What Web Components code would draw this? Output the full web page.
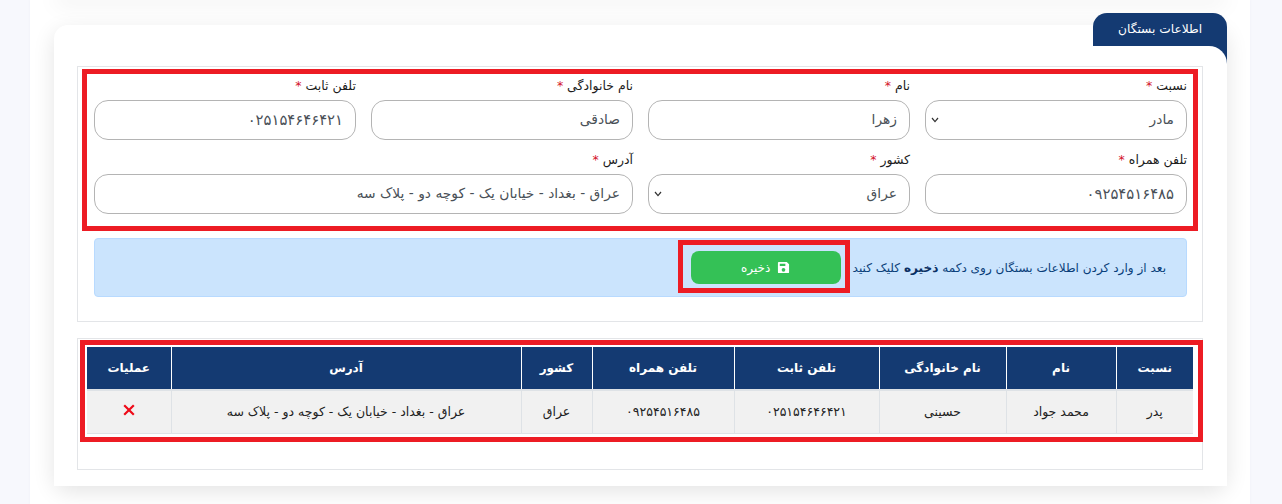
<!DOCTYPE html>
<html lang="fa" dir="rtl">
<head>
<meta charset="utf-8">
<title>اطلاعات بستگان</title>
<style>
  html, body { margin: 0; height: 504px; overflow: hidden; background: #f7f8fd; }
  body { font-family: "DejaVu Sans", "Noto Sans", sans-serif; }
</style>
</head>
<body>
<page-shell>
  <tab-card heading="اطلاعات بستگان">
    <form-box>
      <marked-area kind="form">
        <form-field label="نسبت" select>مادر</form-field>
        <form-field label="نام">زهرا</form-field>
        <form-field label="نام خانوادگی">صادقی</form-field>
        <form-field label="تلفن ثابت" digits>۰۲۵۱۵۴۶۴۶۴۲۱</form-field>
        <form-field label="تلفن همراه" digits>۰۹۲۵۴۵۱۶۴۸۵</form-field>
        <form-field label="کشور" select>عراق</form-field>
        <form-field label="آدرس" wide>عراق - بغداد - خیابان یک - کوچه دو - پلاک سه</form-field>
      </marked-area>
      <save-notice></save-notice>
    </form-box>
    <relatives-table></relatives-table>
  </tab-card>
</page-shell>

<script>
(function(customElements) {
  'use strict';

  class PageShell extends HTMLElement {
    constructor() {
      super();
      const shadowRoot = this.attachShadow({mode: 'open'});
      shadowRoot.innerHTML = `
      <style>
        :host { display: block; margin: 0 32px 0 30px; height: 504px; background: #fff; overflow: hidden;
                box-shadow: 0 0 3px rgba(40,50,90,.04); }
        .prev { height: 10px; margin: -10px 23px 25px 24px; background: #fff; border-radius: 14px;
                box-shadow: 0 4px 22px rgba(0,0,0,.08); }
        .wrap { padding: 0 23px 0 24px; }
      </style>
      <div class="prev"></div>
      <div class="wrap"><slot></slot></div>
      `;
    }
  }

  class TabCard extends HTMLElement {
    constructor() {
      super();
      const shadowRoot = this.attachShadow({mode: 'open'});
      shadowRoot.innerHTML = `
      <style>
        :host { display: flow-root; background: #fff; border-radius: 14px; height: 461px;
                box-shadow: 0 6px 22px rgba(0,0,0,.11); }
        .tab { margin-top: -12px; width: 134px; height: 33px;
               background: #143a72; color: #fff; border-radius: 14px 14px 0 0;
               font-size: 12.2px; line-height: 33px; text-align: center; }
        .under { background: linear-gradient(#143a72, #143a72) top right / 20px 20px no-repeat; }
        .body { background: #fff; border-top-right-radius: 18px; padding: 20px 24px 16px 23px;
                display: flex; flex-direction: column; gap: 16px; }
      </style>
      <div class="tab" id="tab"></div>
      <div class="under"><div class="body"><slot></slot></div></div>
      `;
    }
    connectedCallback() {
      this.shadowRoot.getElementById('tab').textContent = this.getAttribute('heading');
    }
  }

  class FormBox extends HTMLElement {
    constructor() {
      super();
      const shadowRoot = this.attachShadow({mode: 'open'});
      shadowRoot.innerHTML = `
      <style>
        :host { display: block; box-sizing: border-box; height: 256px; border: 1px solid #e3e5e8; padding: 2px 4px 0; }
      </style>
      <slot></slot>
      `;
    }
  }

  class MarkedArea extends HTMLElement {
    constructor() {
      super();
      const shadowRoot = this.attachShadow({mode: 'open'});
      shadowRoot.innerHTML = `
      <style>
        :host { display: grid; box-sizing: border-box; height: 162px; border: 5px solid #ed1c24;
                grid-template-columns: repeat(4, 262px); column-gap: 15px; row-gap: 0;
                grid-auto-rows: 74px; padding: 2px 6px 0 7px; margin-bottom: 7px; }
      </style>
      <slot></slot>
      `;
    }
  }

  class FormField extends HTMLElement {
    constructor() {
      super();
      const shadowRoot = this.attachShadow({mode: 'open'});
      shadowRoot.innerHTML = `
      <style>
        :host { display: block; font-size: 12.5px; color: #222; }
        :host([wide]) { grid-column: span 2; }
        .label { height: 24px; line-height: 19px; color: #1c1c1c; white-space: nowrap; }
        .star { color: #d3132a; }
        .box { box-sizing: border-box; height: 40px; border: 1px solid #b4b4b4; border-radius: 14px; background: #fff;
               display: flex; align-items: center; justify-content: space-between;
               padding: 0 12px 2px 5px; color: #495057; font-size: 13.8px; white-space: nowrap; }
        :host([digits]) .box { font-size: 14.8px; }
        svg { display: none; margin-top: 2px; }
        :host([select]) svg { display: block; }
      </style>
      <div class="label"><span id="label"></span> <span class="star">*</span></div>
      <div class="box">
        <span><slot></slot></span>
        <svg width="8" height="6" viewBox="0 0 8 6"><path d="M1 1l3 3.6L7 1" fill="none" stroke="#333" stroke-width="1.2"/></svg>
      </div>
      `;
    }
    connectedCallback() {
      this.shadowRoot.getElementById('label').textContent = this.getAttribute('label');
    }
  }

  class SaveNotice extends HTMLElement {
    constructor() {
      super();
      const shadowRoot = this.attachShadow({mode: 'open'});
      shadowRoot.innerHTML = `
      <style>
        :host { display: flex; align-items: center; box-sizing: border-box; height: 59px; margin: 0 11px 0 12px;
                background: #cbe4fd; border: 1px solid #b8daff; border-radius: 4px;
                padding: 0 20px; color: #0a3f7a; font-size: 12.08px; white-space: nowrap; }
        b { color: #0a2f63; }
        .mark { box-sizing: border-box; width: 172px; height: 53px; border: 5px solid #ed1c24; margin: -2px 3px 0 0;
                padding: 6px 4px 4px 8px; }
        .btn { height: 33px; border-radius: 8px; background: #34c156; color: #fff; display: flex;
               align-items: center; justify-content: center; gap: 7px; font-size: 12px; }
        svg { display: block; }
      </style>
      <span>بعد از وارد کردن اطلاعات بستگان روی دکمه <b>ذخیره</b> کلیک کنید</span>
      <div class="mark">
        <div class="btn">
          <svg width="13" height="13" viewBox="0 0 14 14"><path fill="#fff" fill-rule="evenodd" d="M2 1h8.5L13 3.5V12a1 1 0 0 1-1 1H2a1 1 0 0 1-1-1V2a1 1 0 0 1 1-1zM3 3v2.5h6V3zM7 7.5a2 2 0 1 0 0 4 2 2 0 0 0 0-4z"/></svg>
          <span>ذخیره</span>
        </div>
      </div>
      `;
    }
  }

  class RelativesTable extends HTMLElement {
    constructor() {
      super();
      const shadowRoot = this.attachShadow({mode: 'open'});
      const heads = ['نسبت', 'نام', 'نام خانوادگی', 'تلفن ثابت', 'تلفن همراه', 'کشور', 'آدرس', 'عملیات'];
      const cells = ['پدر', 'محمد جواد', 'حسینی', '۰۲۵۱۵۴۶۴۶۴۲۱', '۰۹۲۵۴۵۱۶۴۸۵', 'عراق', 'عراق - بغداد - خیابان یک - کوچه دو - پلاک سه'];
      const widths = [77, 110, 127, 145, 142, 71, 350, 84];
      shadowRoot.innerHTML = `
      <style>
        :host { display: block; box-sizing: border-box; height: 132px; border: 1px solid #e3e5e8; padding: 1px 0 0 2px; }
        .mark { box-sizing: border-box; height: 102px; border: 5px solid #ed1c24;
                padding: 2px 5px 0 0; margin: 0 -1px 0 0; }
        table { border-collapse: collapse; table-layout: fixed; width: 1106px; font-size: 12.5px; }
        th { height: 43px; box-sizing: border-box; padding: 0; background: #143a72; color: #fff; font-weight: bold; font-size: 12px;
             border-left: 1px solid #fff; border-bottom: 2px solid #dee2e6; }
        th:last-child { border-left: 0; }
        td { height: 43px; box-sizing: border-box; padding: 0; background: #f1f1f1; color: #222; text-align: center;
             border-left: 1px solid #dee2e6; border-bottom: 1px solid #dee2e6; white-space: nowrap; }
        td:last-child { border-left: 0; }
        svg { display: block; margin: -3px auto 0; }
      </style>
      <div class="mark">
        <table>
          <colgroup>${widths.map(w => `<col style="width:${w}px">`).join('')}</colgroup>
          <thead><tr>${heads.map(h => `<th>${h}</th>`).join('')}</tr></thead>
          <tbody><tr>${cells.map(c => `<td>${c}</td>`).join('')}
            <td><svg width="12" height="12" viewBox="0 0 12 12"><path d="M1.2 1.2l9.6 9.6M10.8 1.2l-9.6 9.6" stroke="#ee0a18" stroke-width="2.2" fill="none"/></svg></td>
          </tr></tbody>
        </table>
      </div>
      `;
    }
  }

  customElements.define('page-shell', PageShell);
  customElements.define('tab-card', TabCard);
  customElements.define('form-box', FormBox);
  customElements.define('marked-area', MarkedArea);
  customElements.define('form-field', FormField);
  customElements.define('save-notice', SaveNotice);
  customElements.define('relatives-table', RelativesTable);
})(window.customElements);
</script>
</body>
</html>
